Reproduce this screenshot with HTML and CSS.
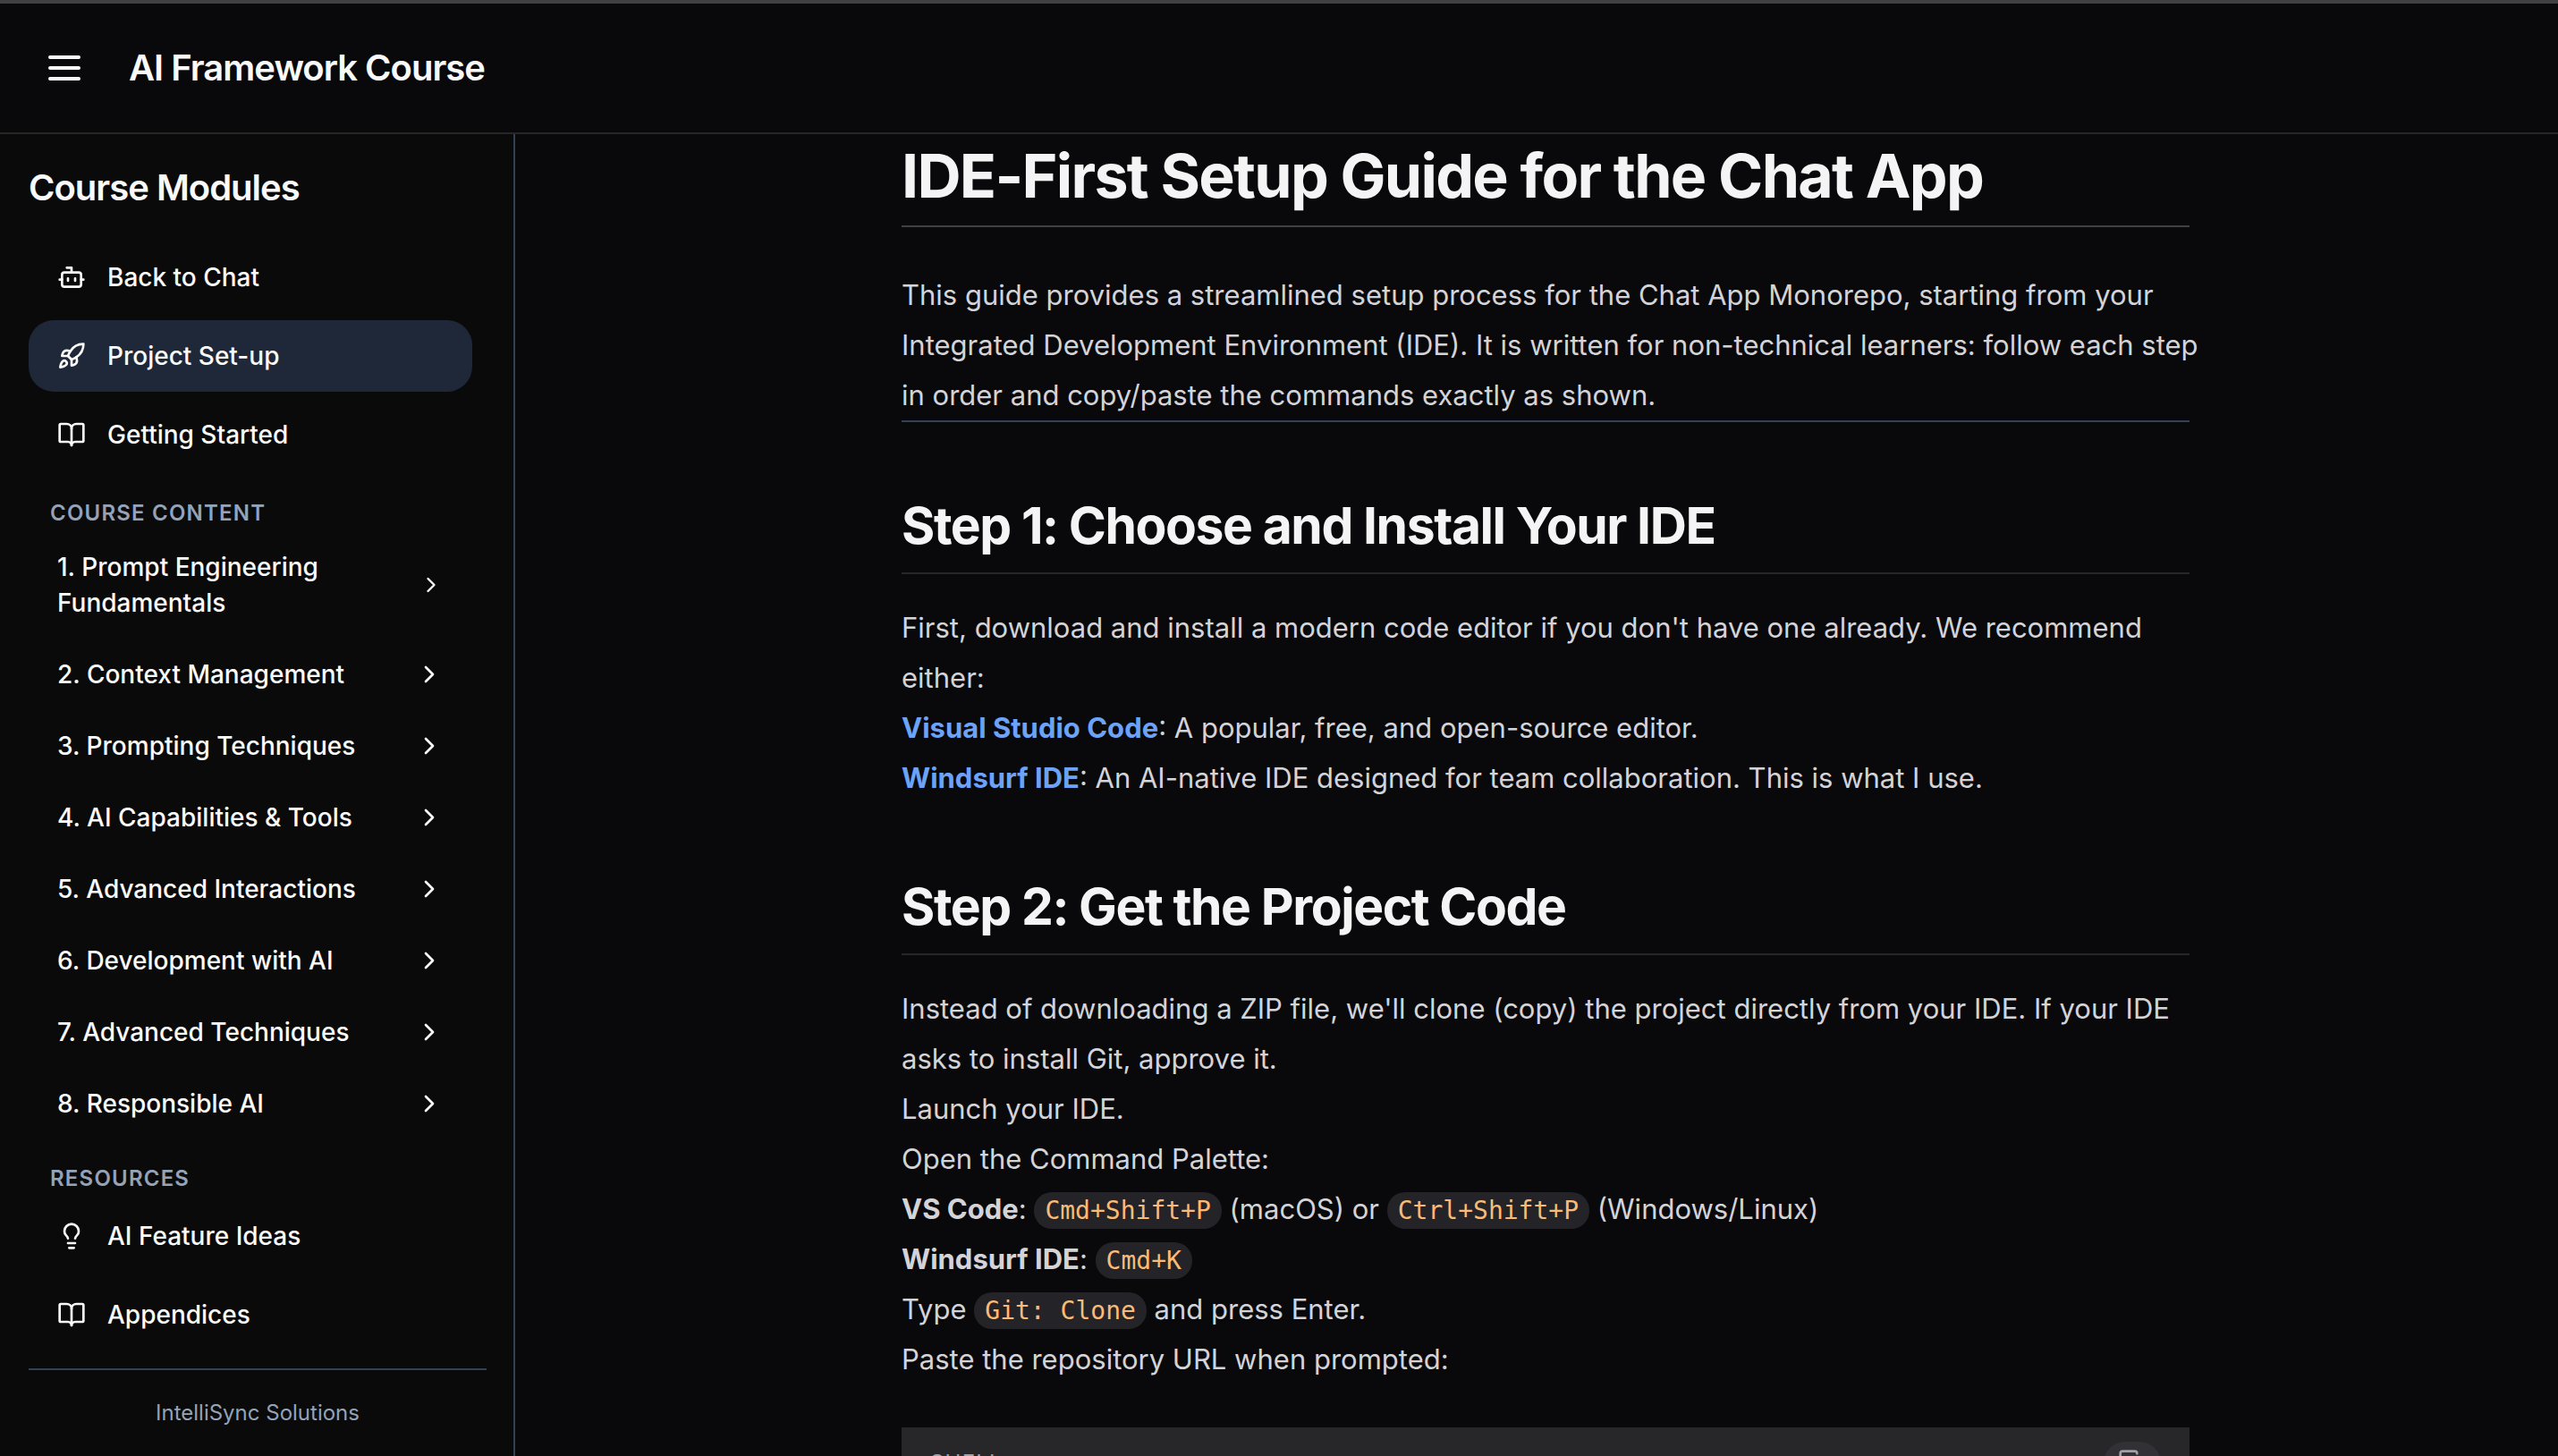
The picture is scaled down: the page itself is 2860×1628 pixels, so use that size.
FILE: index.html
```html
<!DOCTYPE html>
<html lang="en">
<head>
<meta charset="utf-8">
<meta name="viewport" content="width=device-width, initial-scale=1">
<title>AI Framework Course</title>
<link rel="stylesheet" href="styles.css">
</head>
<body>
<svg class="sprite" aria-hidden="true">
  <symbol id="menu" viewBox="0 0 24 24"><path d="M4 6h16M4 12h16M4 18h16"/></symbol>
  <symbol id="bot" viewBox="0 0 24 24"><path d="M12 8V4H8"/><rect width="16" height="12" x="4" y="8" rx="2"/><path d="M2 14h2M20 14h2M15 13v2M9 13v2"/></symbol>
  <symbol id="rocket" viewBox="0 0 24 24"><path d="M4.5 16.5c-1.5 1.26-2 5-2 5s3.740-.5 5-2c.71-.84.7-2.130-.09-2.910a2.180 2.180 0 0 0-2.910-.09z"/><path d="m12 15-3-3a22 22 0 0 1 2-3.950A12.880 12.880 0 0 1 22 2c0 2.720-.78 7.500-6 11a22.350 22.350 0 0 1-4 2z"/><path d="M9 12H4s.55-3.030 2-4c1.620-1.080 5 0 5 0"/><path d="M12 15v5s3.030-.55 4-2c1.080-1.620 0-5 0-5"/></symbol>
  <symbol id="book" viewBox="0 0 24 24"><path d="M12 7v14"/><path d="M3 18a1 1 0 0 1-1-1V4a1 1 0 0 1 1-1h5a4 4 0 0 1 4 4 4 4 0 0 1 4-4h5a1 1 0 0 1 1 1v13a1 1 0 0 1-1 1h-6a3 3 0 0 0-3 3 3 3 0 0 0-3-3z"/></symbol>
  <symbol id="bulb" viewBox="0 0 24 24"><path d="M15 14c.2-1 .7-1.700 1.500-2.500 1-.9 1.500-2.200 1.500-3.500A6 6 0 0 0 6 8c0 1 .2 2.200 1.500 3.500.7.7 1.300 1.500 1.500 2.500"/><path d="M9 18h6M10 22h4"/></symbol>
  <symbol id="chevron" viewBox="0 0 24 24"><path d="m9 18 6-6-6-6"/></symbol>
  <symbol id="copy" viewBox="0 0 24 24"><rect width="14" height="14" x="8" y="8" rx="2"/><path d="M4 16c-1.100 0-2-.9-2-2V4c0-1.100.9-2 2-2h10c1.100 0 2 .9 2 2"/></symbol>
</svg>

<header class="topbar">
  <button class="menu-button" type="button" aria-label="Toggle menu"><svg class="icon icon-large"><use href="#menu"/></svg></button>
  <p class="brand">AI Framework Course</p>
</header>

<div class="layout">
  <aside class="sidebar">
    <h2 class="sidebar-title">Course Modules</h2>
    <nav class="nav">
      <a class="nav-link" href="#chat"><svg class="icon"><use href="#bot"/></svg>Back to Chat</a>
      <a class="nav-link active" href="#setup" aria-current="page"><svg class="icon"><use href="#rocket"/></svg>Project Set-up</a>
      <a class="nav-link" href="#start"><svg class="icon"><use href="#book"/></svg>Getting Started</a>
      <h3 class="nav-label">Course Content</h3>
      <div class="modules">
        <button class="module" type="button"><span>1. Prompt Engineering Fundamentals</span><svg class="icon icon-small"><use href="#chevron"/></svg></button>
        <button class="module" type="button"><span>2. Context Management</span><svg class="icon"><use href="#chevron"/></svg></button>
        <button class="module" type="button"><span>3. Prompting Techniques</span><svg class="icon"><use href="#chevron"/></svg></button>
        <button class="module" type="button"><span>4. AI Capabilities &amp; Tools</span><svg class="icon"><use href="#chevron"/></svg></button>
        <button class="module" type="button"><span>5. Advanced Interactions</span><svg class="icon"><use href="#chevron"/></svg></button>
        <button class="module" type="button"><span>6. Development with AI</span><svg class="icon"><use href="#chevron"/></svg></button>
        <button class="module" type="button"><span>7. Advanced Techniques</span><svg class="icon"><use href="#chevron"/></svg></button>
        <button class="module" type="button"><span>8. Responsible AI</span><svg class="icon"><use href="#chevron"/></svg></button>
      </div>
      <h3 class="nav-label">Resources</h3>
      <a class="nav-link" href="#ideas"><svg class="icon"><use href="#bulb"/></svg>AI Feature Ideas</a>
      <a class="nav-link" href="#appendices"><svg class="icon"><use href="#book"/></svg>Appendices</a>
    </nav>
    <footer class="sidebar-footer">IntelliSync Solutions</footer>
  </aside>

  <main class="main">
    <article class="article">
      <h1>IDE-First Setup Guide for the Chat App</h1>
      <p>This guide provides a streamlined setup process for the Chat App Monorepo, starting from your Integrated Development Environment (IDE). It is written for non-technical learners: follow each step in order and copy/paste the commands exactly as shown.</p>
      <hr>
      <h2>Step 1: Choose and Install Your IDE</h2>
      <p>First, download and install a modern code editor if you don't have one already. We recommend either:</p>
      <ul>
        <li><a href="#vscode">Visual Studio Code</a>: A popular, free, and open-source editor.</li>
        <li><a href="#windsurf">Windsurf IDE</a>: An AI-native IDE designed for team collaboration. This is what I use.</li>
      </ul>
      <h2>Step 2: Get the Project Code</h2>
      <p>Instead of downloading a ZIP file, we'll clone (copy) the project directly from your IDE. If your IDE asks to install Git, approve it.</p>
      <ul>
        <li>Launch your IDE.</li>
        <li>Open the Command Palette:</li>
        <li><strong>VS Code</strong>: <code>Cmd+Shift+P</code> (macOS) or <code>Ctrl+Shift+P</code> (Windows/Linux)</li>
        <li><strong>Windsurf IDE</strong>: <code>Cmd+K</code></li>
        <li>Type <code>Git: Clone</code> and press Enter.</li>
        <li>Paste the repository URL when prompted:</li>
      </ul>
      <div class="code-block">
        <span class="code-language">shell</span>
        <button class="copy-button" type="button" aria-label="Copy code"><svg class="icon"><use href="#copy"/></svg></button>
      </div>
    </article>
  </main>
</div>
</body>
</html>
```
FILE: styles.css
```css
*, *::before, *::after { box-sizing: border-box; }

html, body { height: 100%; }

body {
  margin: 0;
  display: flex;
  flex-direction: column;
  overflow: hidden;
  background: #09090b;
  color: #fafafa;
  font: 31px/56px Inter, "Liberation Sans", sans-serif;
}

h1, h2, h3, p, ul { margin: 0; padding: 0; }
ul { list-style: none; }
a { text-decoration: none; }
button { border: 0; background: none; color: inherit; font: inherit; cursor: pointer; }

.sprite { display: none; }

.icon {
  flex: none;
  width: 32px;
  height: 32px;
  fill: none;
  stroke: currentColor;
  stroke-width: 2;
  stroke-linecap: round;
  stroke-linejoin: round;
}
.icon-large { width: 48px; height: 48px; }
.icon-small { width: 28px; height: 28px; }

/* Header */
.topbar {
  flex: none;
  display: flex;
  align-items: center;
  gap: 32px;
  padding: 32px;
  border-top: 4px solid #404040;
  border-bottom: 2px solid #262626;
}
.menu-button { display: flex; padding: 16px; }
.brand { font-size: 40px; font-weight: 600; letter-spacing: -0.025em; }

.layout { flex: 1; min-height: 0; display: flex; }

/* Sidebar */
.sidebar {
  flex: none;
  width: 576px;
  display: flex;
  flex-direction: column;
  padding: 32px 30px 32px 32px;
  background: #0a0a0a;
  border-right: 2px solid #334155;
}
.sidebar-title { margin-bottom: 32px; font-size: 40px; font-weight: 600; letter-spacing: -0.025em; }
.nav {
  flex: 1;
  display: flex;
  flex-direction: column;
  gap: 8px;
  padding-right: 16px;
  font-size: 28px;
  font-weight: 500;
  line-height: 40px;
}
.nav-link {
  display: flex;
  align-items: center;
  gap: 24px;
  padding: 20px 32px;
  border-radius: 28px;
  color: inherit;
}
.nav-link.active { background: #1f2838; }
.nav-label {
  margin-top: 24px;
  padding: 0 24px;
  color: #94a3b8;
  font-size: 24px;
  font-weight: 600;
  line-height: 32px;
  letter-spacing: 0.05em;
  text-transform: uppercase;
}
.modules { display: flex; flex-direction: column; margin: -4px 0; }
.module {
  display: flex;
  align-items: center;
  justify-content: space-between;
  padding: 20px 32px;
  text-align: left;
}
.sidebar-footer {
  padding-top: 32px;
  border-top: 2px solid #334155;
  color: #94a3b8;
  font-size: 24px;
  line-height: 32px;
  text-align: center;
}

/* Article */
.main { flex: 1; min-width: 0; overflow: hidden; padding: 6px 0 0 20px; }
.article { max-width: 1440px; margin: 0 auto; color: #d4d4d8; }
.article h1, .article h2 { padding-bottom: 16px; color: #f4f4f5; font-weight: 700; letter-spacing: -0.025em; }
.article h1 { margin-bottom: 48px; border-bottom: 2px solid #3f3f46; font-size: 68px; line-height: 80px; }
.article h2 { margin: 80px 0 32px; border-bottom: 2px solid #27272a; font-size: 57px; line-height: 72px; }
.article p { margin-right: -16px; }
.article hr { margin: 0; border: 0; border-top: 2px solid #334155; }
.article a, .article strong { font-weight: 700; }
.article a { color: #6ca3f8; }
.article code {
  padding: 4px 12px;
  border-radius: 20px;
  background: #242428;
  color: #f9bb76;
  font: 28px "DejaVu Sans Mono", monospace;
}
.code-block {
  display: flex;
  align-items: center;
  justify-content: space-between;
  margin-top: 48px;
  padding: 16px 32px;
  background: #27272a;
  color: #a1a1aa;
}
.code-language { font-size: 24px; line-height: 32px; letter-spacing: 0.05em; text-transform: uppercase; }
.copy-button { display: flex; padding: 8px 16px; border-radius: 24px; background: #323236; }
```
